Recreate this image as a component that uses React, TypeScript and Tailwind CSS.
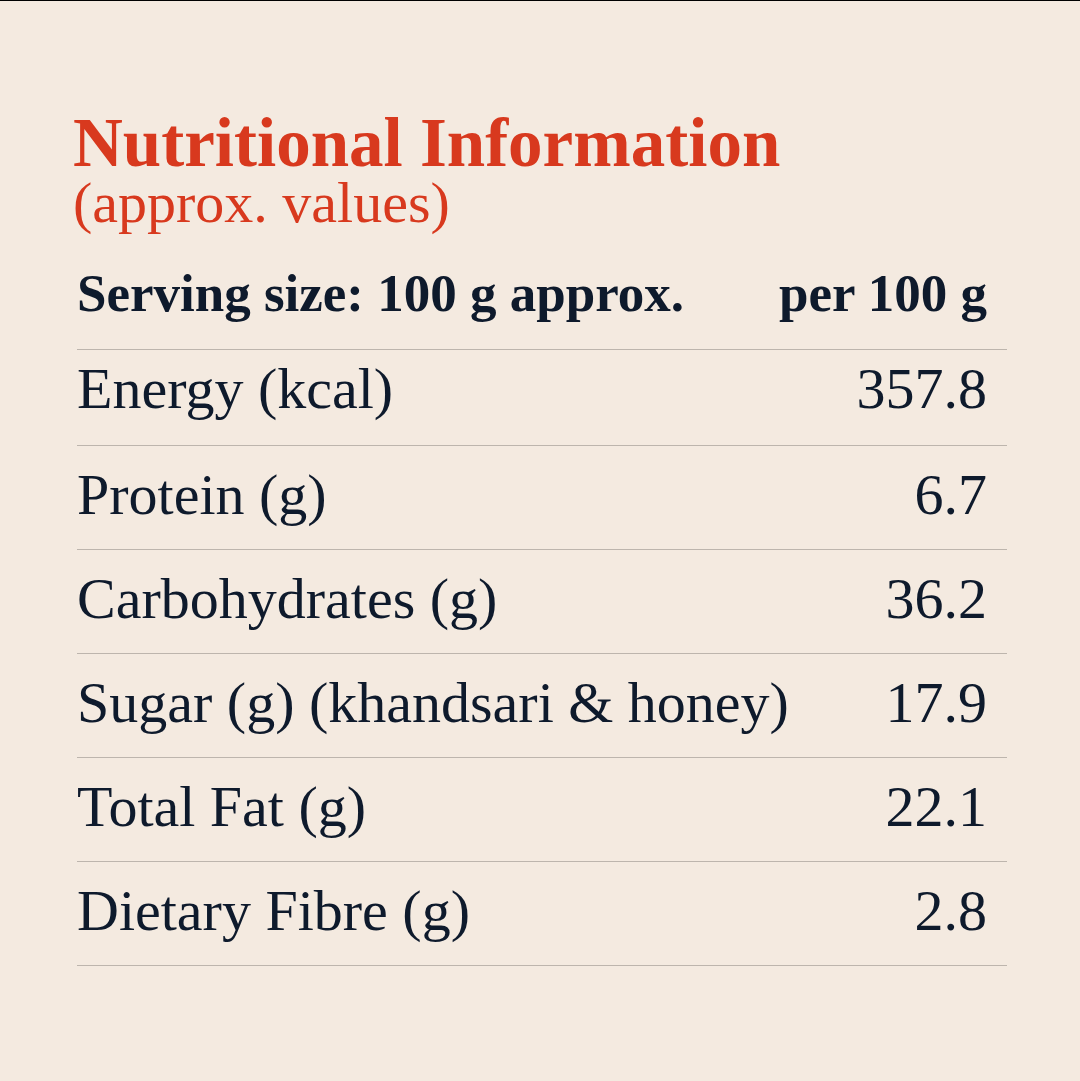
import React from "react";

const rows: { label: string; value: string; first?: boolean }[] = [
  { label: "Energy (kcal)", value: "357.8", first: true },
  { label: "Protein (g)", value: "6.7" },
  { label: "Carbohydrates (g)", value: "36.2" },
  { label: "Sugar (g) (khandsari & honey)", value: "17.9" },
  { label: "Total Fat (g)", value: "22.1" },
  { label: "Dietary Fibre (g)", value: "2.8" },
];

export default function App() {
  return (
    <div
      className="h-[1081px] w-full overflow-hidden border-t border-black bg-[#f4eae0] text-[#0e1a2c]"
      style={{ fontFamily: '"Liberation Serif", "Times New Roman", serif' }}
    >
      <div className="pl-[73px] pt-[108px] text-[#d8391e]">
        <h1 className="text-[69px] font-bold leading-[68px]">Nutritional Information</h1>
        <p className="text-[58px] leading-[52px]">(approx. values)</p>
      </div>
      <div className="ml-[77px] mt-[34px] w-[930px]">
        <div className="flex justify-between border-b border-[#bdb5ad] pb-[26px] pr-[20px] text-[53px] font-bold leading-[60px]">
          <span>Serving size: 100 g approx.</span>
          <span>per 100 g</span>
        </div>
        {rows.map((r) => (
          <div
            key={r.label}
            className={
              r.first
                ? "flex justify-between border-b border-[#bdb5ad] pt-[10px] pb-[27px] pr-[20px] text-[58px] leading-[58px]"
                : "flex justify-between border-b border-[#bdb5ad] pt-[20px] pb-[25px] pr-[20px] text-[58px] leading-[58px]"
            }
          >
            <span>{r.label}</span>
            <span>{r.value}</span>
          </div>
        ))}
      </div>
    </div>
  );
}
